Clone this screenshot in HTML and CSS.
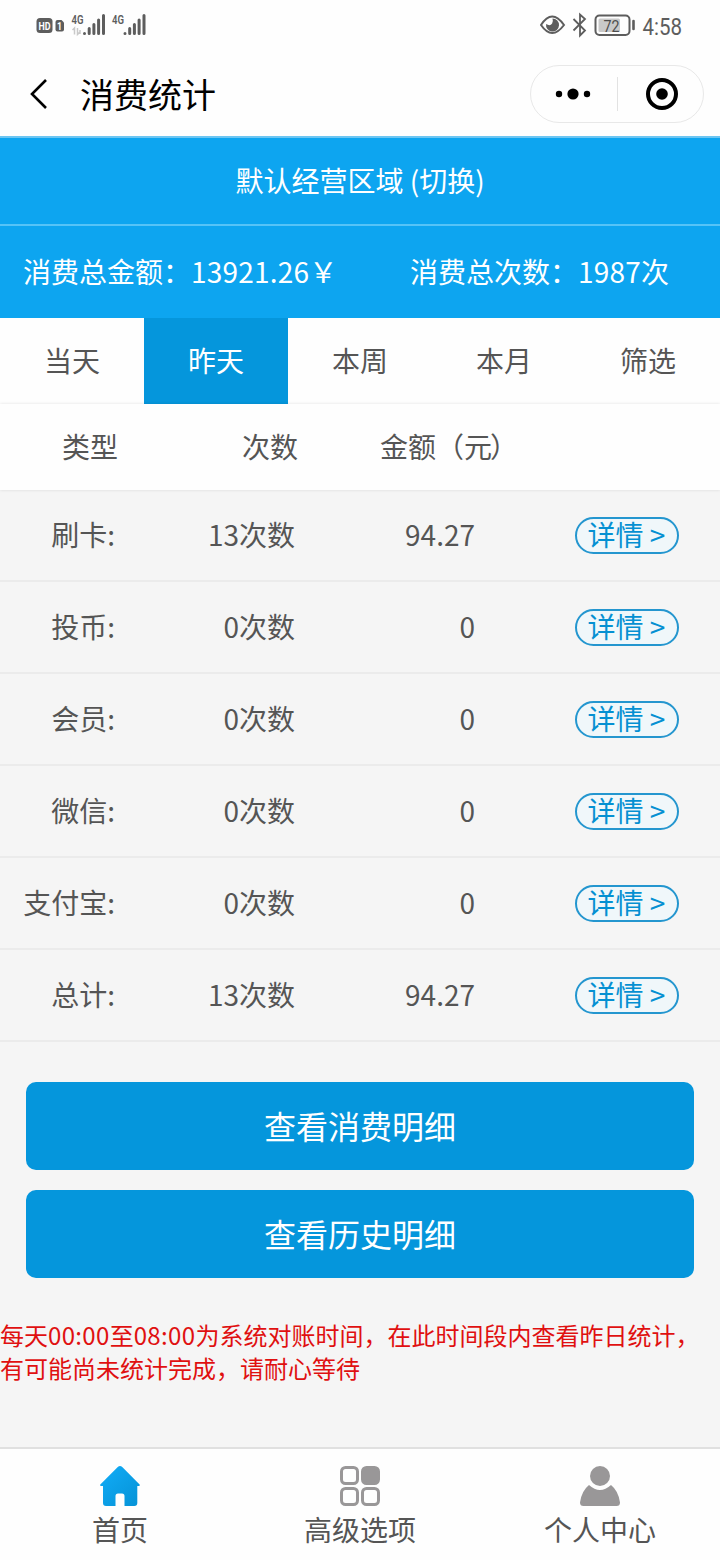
FILE: index.html
```html
<!DOCTYPE html>
<html lang="zh-CN">
<head>
  <meta charset="UTF-8">
  <meta name="viewport" content="width=device-width, initial-scale=1.0">
  <title>消费统计</title>
  <link rel="stylesheet" href="styles.css">
</head>
<body>

  <!-- 状态栏 -->
  <div class="status-bar">
    <svg class="status-left" width="112" height="36" viewBox="36 8 112 36">
      <rect x="36.5" y="18" width="16" height="15" rx="3.5" fill="#5d5d5d"/>
      <text x="38.5" y="29.6" font-size="10.5" font-weight="700" fill="#fff" textLength="12" lengthAdjust="spacingAndGlyphs">HD</text>
      <path d="M57.5 20h4l2.500 2.500v7a2 2 0 0 1-2 2h-4.500a2 2 0 0 1-2-2v-7.500a2 2 0 0 1 2-2z" fill="#5d5d5d"/>
      <text x="57" y="29.800" font-size="10.500" font-weight="700" fill="#fff" textLength="5" lengthAdjust="spacingAndGlyphs">1</text>
      <text x="71.500" y="23.500" font-size="13" font-weight="600" fill="#5d5d5d" textLength="12" lengthAdjust="spacingAndGlyphs">4G</text>
      <path d="M72.500 30l2-2v6.500M77.500 28v6.500l2.500-2.500M80 30v4" stroke="#c9c9c9" stroke-width="1.500" fill="none"/>
      <path d="M84.500 33.400v.1M89.200 28.500v5M93.900 24.500v9M98.600 20v13.500M103.500 15.500v18" stroke="#5d5d5d" stroke-width="3" stroke-linecap="round"/>
      <text x="112" y="23.500" font-size="13" font-weight="600" fill="#5d5d5d" textLength="12" lengthAdjust="spacingAndGlyphs">4G</text>
      <path d="M125 33.400v.1M129.700 28.500v5M134.400 24.500v9M139.100 20v13.500M144 15.500v18" stroke="#5d5d5d" stroke-width="3" stroke-linecap="round"/>
    </svg>
    <svg class="status-right" width="148" height="36" viewBox="540 8 148 36">
      <path d="M541 25q11-17 23 0q-12 16-23 0z" fill="none" stroke="#5d5d5d" stroke-width="2"/>
      <path d="M552.500 18.500a6.500 6.500 0 1 1-6.400 5.500q4 2.500 6-.5q1.300-2.500.4-5z" fill="#5d5d5d"/>
      <path d="M573.500 19l11.500 11.500l-5 5v-21l5 4.500l-11.500 11.500" fill="none" stroke="#5d5d5d" stroke-width="1.800"/>
      <rect x="595.500" y="15.500" width="34" height="19.500" rx="4" fill="none" stroke="#5d5d5d" stroke-width="2"/>
      <rect x="598.500" y="18.500" width="21.500" height="13.500" rx="1.500" fill="#c9c9c9"/>
      <path d="M633.500 21v8" stroke="#5d5d5d" stroke-width="2.600" stroke-linecap="round"/>
      <text x="603.500" y="31.500" font-size="17" fill="#4d4d4d" textLength="16" lengthAdjust="spacingAndGlyphs">72</text>
      <text x="642.500" y="34.500" font-size="23.500" fill="#5d5d5d" textLength="39.500" lengthAdjust="spacingAndGlyphs">4:58</text>
    </svg>
  </div>

  <!-- 导航栏 -->
  <div class="nav-bar">
    <svg class="back" width="20" height="34" viewBox="0 0 20 34">
      <path d="M18 3L4 17l14 14" fill="none" stroke="#000" stroke-width="2.600"/>
    </svg>
    <h1 class="title">消费统计</h1>
    <div class="capsule">
      <svg width="36" height="12" viewBox="0 0 36 12">
        <circle cx="4" cy="6" r="3.200"/>
        <circle cx="18" cy="6" r="5.600"/>
        <circle cx="32" cy="6" r="3.200"/>
      </svg>
      <span class="capsule-line"></span>
      <svg width="32" height="32" viewBox="0 0 32 32">
        <circle cx="16" cy="16" r="14" fill="none" stroke="#000" stroke-width="4"/>
        <circle cx="16" cy="16" r="5.800"/>
      </svg>
    </div>
  </div>

  <div class="area">默认经营区域 (切换)</div>
  <div class="totals">
    <div class="total">消费总金额：<span class="total-num">13921.26</span>￥</div>
    <div class="total">消费总次数：<span class="total-num">1987</span>次</div>
  </div>

  <div class="tabs">
    <div class="tab">当天</div>
    <div class="tab active">昨天</div>
    <div class="tab">本周</div>
    <div class="tab">本月</div>
    <div class="tab">筛选</div>
  </div>

  <div class="table-head">
    <div>类型</div>
    <div>次数</div>
    <div>金额（元<span class="paren">）</span></div>
    <div></div>
  </div>

  <div class="row">
    <div class="cell">刷卡:</div>
    <div class="cell">13次数</div>
    <div class="cell">94.27</div>
    <div class="action"><a class="detail">详情 &gt;</a></div>
  </div>
  <div class="row">
    <div class="cell">投币:</div>
    <div class="cell">0次数</div>
    <div class="cell">0</div>
    <div class="action"><a class="detail">详情 &gt;</a></div>
  </div>
  <div class="row">
    <div class="cell">会员:</div>
    <div class="cell">0次数</div>
    <div class="cell">0</div>
    <div class="action"><a class="detail">详情 &gt;</a></div>
  </div>
  <div class="row">
    <div class="cell">微信:</div>
    <div class="cell">0次数</div>
    <div class="cell">0</div>
    <div class="action"><a class="detail">详情 &gt;</a></div>
  </div>
  <div class="row">
    <div class="cell">支付宝:</div>
    <div class="cell">0次数</div>
    <div class="cell">0</div>
    <div class="action"><a class="detail">详情 &gt;</a></div>
  </div>
  <div class="row">
    <div class="cell">总计:</div>
    <div class="cell">13次数</div>
    <div class="cell">94.27</div>
    <div class="action"><a class="detail">详情 &gt;</a></div>
  </div>

  <div class="buttons">
    <button type="button">查看消费明细</button>
    <button type="button">查看历史明细</button>
  </div>

  <p class="notice">每天<span class="time">00:00</span>至<span class="time">08:00</span>为系统对账时间，在此时间段内查看昨日统计，<br>有可能尚未统计完成，请耐心等待</p>

  <!-- 底部菜单 -->
  <div class="tab-bar">
    <div class="tab-item">
      <svg width="40" height="40" viewBox="0 0 40 40">
        <defs>
          <linearGradient id="home" x1="0" y1="0" x2="1" y2="1">
            <stop offset="0" stop-color="#12adf8"/>
            <stop offset="1" stop-color="#0592d6"/>
          </linearGradient>
        </defs>
        <path d="M18 .8q2-1.400 4 0L39.600 18.500q.8 1.500-1 1.500H37.300v17q0 3-3 3H24.500V30q0-2.500-2.500-2.500h-4Q15.500 27.500 15.500 30V40H6q-3 0-3-3V20H1.300q-1.800 0-1-1.500z" fill="url(#home)"/>
      </svg>
      <span>首页</span>
    </div>
    <div class="tab-item">
      <svg width="40" height="40" viewBox="0 0 40 40" fill="none" stroke="#999798" stroke-width="3">
        <rect x="1.500" y="1.500" width="16" height="16" rx="4"/>
        <rect x="22.500" y="1.500" width="16" height="16" rx="4" fill="#999798"/>
        <rect x="1.500" y="22.500" width="16" height="16" rx="4"/>
        <rect x="22.500" y="22.500" width="16" height="16" rx="4"/>
      </svg>
      <span>高级选项</span>
    </div>
    <div class="tab-item">
      <svg width="40" height="40" viewBox="0 0 40 40" fill="#999798">
        <circle cx="20" cy="10" r="10"/>
        <path d="M9 19Q20 29 31 19Q38.500 25 40 36.500Q40 40 36.500 40H3.500Q0 40 0 36.500Q1.500 25 9 19z"/>
      </svg>
      <span>个人中心</span>
    </div>
  </div>

</body>
</html>
```
FILE: styles.css
```css
* {
  box-sizing: border-box;
}

body {
  display: flex;
  flex-direction: column;
  height: 1560px;
  margin: 0;
  background-color: #f5f5f5;
  font-family: "Noto Sans CJK SC", sans-serif;
  font-size: 28px;
  color: #555;
}

.status-bar {
  display: flex;
  justify-content: space-between;
  height: 50px;
  padding: 8px 32px 0 36px;
  background-color: #fefefe;
  font-family: Roboto, sans-serif;
}

.nav-bar {
  display: flex;
  align-items: center;
  height: 88px;
  padding: 1px 16px 0 28px;
  background-color: #fefefe;
  border-bottom: 2px solid #6cc5f2;
}

.title {
  flex: 1;
  margin: 0 0 0 32px;
  font-size: 34px;
  line-height: 50px;
  font-weight: 400;
  color: #000;
}

.capsule {
  display: flex;
  align-items: center;
  justify-content: space-between;
  width: 174px;
  height: 58px;
  padding: 0 25px 0 24px;
  border: 1px solid #e8e8e8;
  border-radius: 29px;
}

.capsule-line {
  width: 1px;
  height: 34px;
  margin-right: 2px;
  background-color: #e2e2e2;
}

.area {
  height: 88px;
  line-height: 84px;
  text-align: center;
  color: #fff;
  background-color: #0da5f0;
  border-bottom: 2px solid #55c3f7;
}

.totals {
  display: flex;
  height: 92px;
  line-height: 90px;
  padding-left: 23px;
  color: #fff;
  background-color: #0da5f0;
}

.total {
  flex: none;
  width: 387px;
  white-space: nowrap;
}

.total:last-child {
  width: auto;
}

.total-num {
  letter-spacing: 0.2px;
}

.tabs {
  display: flex;
  height: 86px;
  line-height: 84px;
  background-color: #fefefe;
}

.tab {
  flex: 1;
  text-align: center;
}

.tab.active {
  color: #fff;
  background-color: #0596dc;
}

.table-head {
  display: grid;
  grid-template-columns: repeat(4, 180px);
  height: 86px;
  line-height: 84px;
  text-align: center;
  background-color: #fefefe;
  box-shadow: 0 0 3px rgba(0, 0, 0, 0.12);
}

.paren {
  margin-left: -2px;
  margin-right: 2px;
}

.row {
  display: grid;
  grid-template-columns: repeat(4, 180px);
  height: 92px;
  line-height: 88px;
  border-bottom: 2px solid #ebebeb;
}

.cell {
  padding-right: 65px;
  text-align: right;
}

.action {
  display: flex;
  align-items: center;
  padding-left: 35px;
}

.detail {
  width: 104px;
  height: 37px;
  line-height: 31px;
  padding-right: 1px;
  text-align: center;
  color: #0590d2;
  background-color: #f0f7fa;
  border: 2px solid #2496cf;
  border-radius: 19px;
}

.buttons {
  display: flex;
  flex-direction: column;
  gap: 20px;
  padding: 40px 26px;
}

button {
  height: 88px;
  padding: 0 0 3px;
  border: none;
  border-radius: 10px;
  background-color: #0596dc;
  color: #fff;
  font-family: inherit;
  font-size: 32px;
}

.notice {
  margin: 0;
  font-size: 24px;
  line-height: 33px;
  color: #e01010;
  white-space: nowrap;
}

.time {
  letter-spacing: 0.35px;
}

.tab-bar {
  display: flex;
  height: 113px;
  margin-top: auto;
  padding-top: 17px;
  border-top: 2px solid #e0e0e0;
  background-color: #fefefe;
}

.tab-item {
  display: flex;
  flex: 1;
  flex-direction: column;
  align-items: center;
  gap: 4px;
  line-height: 38px;
}
```
